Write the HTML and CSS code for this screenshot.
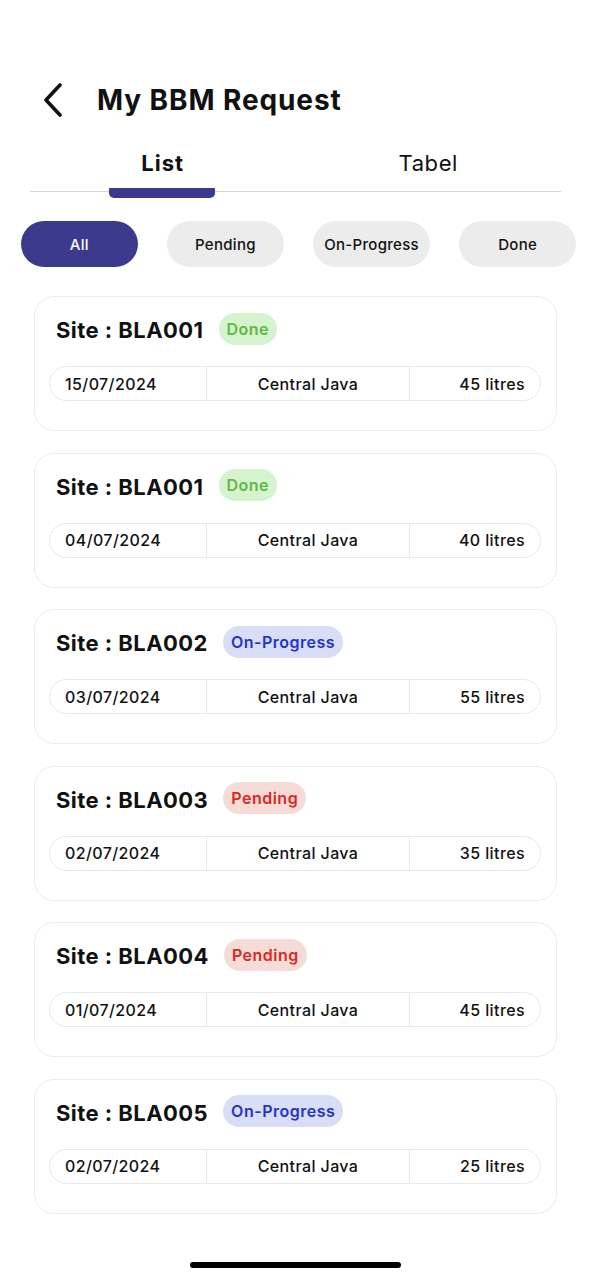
FILE: index.html
```html
<!DOCTYPE html>
<html lang="en">
<head>
<meta charset="utf-8">
<title>My BBM Request</title>
<link rel="stylesheet" href="styles.css">
</head>
<body>
<div class="screen">
  <header class="topbar">
    <span class="back">
      <svg width="22" height="34" viewBox="0 0 22 34"><path d="M18 2 L4 17 L18 32" fill="none" stroke="#111" stroke-width="3.6" stroke-linecap="round" stroke-linejoin="round"/></svg>
    </span>
    <h1 class="title">My BBM Request</h1>
  </header>

  <nav class="tabs">
    <div class="tab active">List<span class="indicator"></span></div>
    <div class="tab">Tabel</div>
  </nav>

  <div class="filters">
    <button class="pill active">All</button>
    <button class="pill">Pending</button>
    <button class="pill">On-Progress</button>
    <button class="pill">Done</button>
  </div>

  <div class="cards">
    <article class="card">
      <div class="card-head"><h2 class="site">Site : BLA001</h2><span class="badge done">Done</span></div>
      <div class="row"><span class="c date">15/07/2024</span><span class="c region">Central Java</span><span class="c litres">45 litres</span></div>
    </article>
    <article class="card">
      <div class="card-head"><h2 class="site">Site : BLA001</h2><span class="badge done">Done</span></div>
      <div class="row"><span class="c date">04/07/2024</span><span class="c region">Central Java</span><span class="c litres">40 litres</span></div>
    </article>
    <article class="card">
      <div class="card-head"><h2 class="site">Site : BLA002</h2><span class="badge progress">On-Progress</span></div>
      <div class="row"><span class="c date">03/07/2024</span><span class="c region">Central Java</span><span class="c litres">55 litres</span></div>
    </article>
    <article class="card">
      <div class="card-head"><h2 class="site">Site : BLA003</h2><span class="badge pending">Pending</span></div>
      <div class="row"><span class="c date">02/07/2024</span><span class="c region">Central Java</span><span class="c litres">35 litres</span></div>
    </article>
    <article class="card">
      <div class="card-head"><h2 class="site">Site : BLA004</h2><span class="badge pending">Pending</span></div>
      <div class="row"><span class="c date">01/07/2024</span><span class="c region">Central Java</span><span class="c litres">45 litres</span></div>
    </article>
    <article class="card">
      <div class="card-head"><h2 class="site">Site : BLA005</h2><span class="badge progress">On-Progress</span></div>
      <div class="row"><span class="c date">02/07/2024</span><span class="c region">Central Java</span><span class="c litres">25 litres</span></div>
    </article>
  </div>

  <div class="home-bar"></div>
</div>
</body>
</html>
```

FILE: styles.css
```css
* { box-sizing: border-box; }
html, body { margin: 0; padding: 0; background: #fff; }
body {
  font-family: "Inter", "DejaVu Sans", sans-serif;
  color: #111;
}
.screen {
  width: 591px;
  min-height: 1280px;
  display: flex;
  flex-direction: column;
}
.topbar {
  display: flex;
  align-items: center;
  padding: 82px 0 0 42px;
  height: 117px;
}
.back { display: flex; width: 22px; height: 34px; }
.title {
  margin: 0 0 0 33px;
  font-size: 28px;
  font-weight: 700;
  letter-spacing: 0.9px;
  color: #111;
}
.tabs {
  display: grid;
  grid-template-columns: 1fr 1fr;
  margin: 26px 30px 0;
  border-bottom: 1.5px solid #d6d6d6;
  height: 49px;
}
.tab {
  position: relative;
  text-align: center;
  font-size: 22px;
  font-weight: 400;
  letter-spacing: 0.6px;
  line-height: 40px;
  color: #111;
}
.tab.active { font-weight: 700; letter-spacing: 1px; }
.indicator {
  position: absolute;
  left: 79px;
  width: 106px;
  top: 45px;
  height: 10px;
  background: #3b3a8c;
  border-radius: 1px 1px 5px 5px;
}
.filters {
  display: grid;
  grid-template-columns: repeat(4, 1fr);
  gap: 29.5px;
  padding: 0 15px 0 21px;
  margin-top: 29px;
}
.pill {
  height: 46px;
  border: none;
  border-radius: 23px;
  background: #ececec;
  font-family: inherit;
  font-size: 15px;
  font-weight: 500;
  letter-spacing: 0.3px;
  color: #111;
  padding: 0;
}
.pill.active { background: #3b3a8c; color: #fff; }
.cards {
  display: flex;
  flex-direction: column;
  gap: 21.6px;
  margin: 29px 0 0 34px;
  width: 523px;
}
.card {
  height: 135px;
  border: 1.5px solid #ececec;
  border-radius: 20px;
  padding: 15px 15px 0 14px;
  background: #fff;
}
.card-head {
  display: flex;
  align-items: center;
  height: 33px;
  padding-left: 7px;
}
.site {
  margin: 0;
  font-size: 22px;
  font-weight: 700;
  letter-spacing: 0.45px;
  color: #111;
  padding-top: 3px;
}
.badge {
  margin-left: 15px;
  height: 32px;
  line-height: 32px;
  padding: 0 8px;
  border-radius: 16px;
  font-size: 16px;
  font-weight: 600;
  letter-spacing: 0.5px;
}
.badge.done { background: #d5f3cf; color: #5fb940; }
.badge.progress { background: #d8def5; color: #2434c6; }
.badge.pending { background: #f5dcd7; color: #df2620; }
.row {
  display: grid;
  grid-template-columns: 156px 204px 1fr;
  margin-top: 21px;
  height: 35px;
  border: 1.5px solid #e8e8e8;
  border-radius: 18px;
  font-size: 16px;
  font-weight: 500;
  letter-spacing: 0.4px;
}
.c {
  display: flex;
  align-items: center;
  padding: 0 15px;
}
.date { justify-content: flex-start; }
.region { justify-content: center; border-left: 1.5px solid #e8e8e8; border-right: 1.5px solid #e8e8e8; }
.litres { justify-content: flex-end; }
.home-bar {
  align-self: center;
  width: 211px;
  height: 6px;
  border-radius: 3px;
  background: #000;
  margin-top: 48px;
}
```
